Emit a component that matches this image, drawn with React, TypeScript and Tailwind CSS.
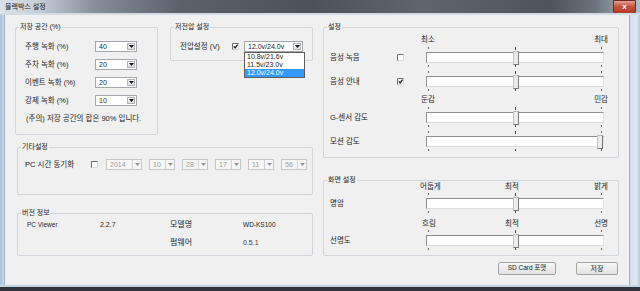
import React from "react";

const Tri = ({ color = "#111" }: { color?: string }) => (
  <svg width="5" height="3" viewBox="0 0 5 3" className="shrink-0">
    <path d="M0 0H5L2.5 3Z" fill={color} />
  </svg>
);

function Check({ checked = false }: { checked?: boolean }) {
  return (
    <svg width="7" height="7" viewBox="0 0 7 7" className="shrink-0">
      <rect x="0" y="0" width="7" height="7" fill="#fff" />
      <path d="M0.5 7V0.5H7" stroke="#6a6a6a" strokeWidth="1" fill="none" />
      <path d="M6.5 0.5V6.5H0.5" stroke="#d8d8d8" strokeWidth="1" fill="none" />
      {checked && <path d="M1.8 3.4L3.1 4.9L5.6 1.6" stroke="#1a1a1a" strokeWidth="1.3" fill="none" />}
    </svg>
  );
}

function Combo({
  value,
  width,
  disabled = false,
  children,
}: {
  value: string;
  width: string;
  disabled?: boolean;
  children?: React.ReactNode;
}) {
  return (
    <div
      className={`relative flex h-[11px] shrink-0 items-stretch border ${width} ${
        disabled ? "border-[#c6c6c6] bg-[#f6f6f6] text-[#9c9c9c]" : "border-[#a3a8af] bg-white text-[#1e1e1e]"
      }`}
    >
      <div className="flex-1 pl-[3px] text-[7px] leading-[9px]">{value}</div>
      {disabled ? (
        <div className="flex w-[9px] items-center justify-center border-l border-[#d2d2d2]">
          <Tri color="#9a9a9a" />
        </div>
      ) : (
        <div className="m-[1px] flex w-[8px] items-center justify-center border border-[#b3b3b3] bg-[linear-gradient(#fbfbfb,#dcdcdc)]">
          <Tri />
        </div>
      )}
      {children}
    </div>
  );
}

function Group({
  title,
  className,
  children,
}: {
  title: string;
  className: string;
  children: React.ReactNode;
}) {
  return (
    <fieldset className={`rounded-[2px] border border-[#cfd5da] ${className}`}>
      <legend className="ml-[3px] px-[1px] text-[7px] leading-[10px] text-[#1e1e1e]">{title}</legend>
      {children}
    </fieldset>
  );
}

function Ticks({ top = false }: { top?: boolean }) {
  return (
    <div className={`flex h-[6px] items-start justify-between px-[2px] ${top ? "pt-[1px]" : "pt-[2px]"}`}>
      <span className="h-[2px] w-[1px] bg-[#6a6a6a]" />
      <span className={`w-[1px] bg-[#4a4a4a] ${top ? "h-[3px]" : "h-[2px]"}`} />
      <span className="h-[2px] w-[1px] bg-[#6a6a6a]" />
    </div>
  );
}

function Slider({ end = false }: { end?: boolean }) {
  return (
    <div className="flex w-[178px] shrink-0 flex-col">
      <Ticks top />
      <div className="relative h-[11px] border border-[#8e8e8e] border-r-[#e4e4e4] border-b-[#dcdcdc] bg-white">
        <div
          className={`absolute top-[-2px] h-[14px] w-[6px] border border-[#7a7a7a] border-t-[#b8b8b8] border-l-[#c4c4c4] bg-[#ececec] ${
            end ? "left-[170px]" : "left-[86px]"
          }`}
        />
      </div>
      <Ticks />
    </div>
  );
}

function SliderRow({ label, check, end }: { label: string; check?: "on" | "off"; end?: boolean }) {
  return (
    <div className="flex items-center">
      <div className="w-[73px] shrink-0 pl-[6px] text-[7.5px] leading-[10px]">{label}</div>
      <div className="flex w-[29px] shrink-0 items-center">{check && <Check checked={check === "on"} />}</div>
      <Slider end={end} />
    </div>
  );
}

function Header2({ a, b }: { a: string; b: string }) {
  return (
    <div className="ml-[97px] flex w-[187px] justify-between text-[7.5px] leading-[10px]">
      <span>{a}</span>
      <span>{b}</span>
    </div>
  );
}

function Header3({ a, b, c, first = "" }: { a: string; b: string; c: string; first?: string }) {
  return (
    <div className="ml-[96px] flex w-[188px] text-[7.5px] leading-[10px]">
      <span className={`w-[85px] ${first}`}>{a}</span>
      <span>{b}</span>
      <span className="ml-auto">{c}</span>
    </div>
  );
}

function StorageRow({ label, value, first }: { label: string; value: string; first?: boolean }) {
  return (
    <div className={`flex h-[11px] items-center ${first ? "" : "mt-[7px]"}`}>
      <div className="w-[79px] shrink-0 pl-[9px] text-[7.5px] leading-[10px]">{label}</div>
      <Combo value={value} width="w-[42px]" />
    </div>
  );
}

export default function App() {
  return (
    <div className="flex h-[291px] w-[640px] flex-col overflow-hidden bg-[#2c3036] font-['Liberation_Sans','Noto_Sans_CJK_KR',sans-serif] text-[#1e1e1e]">
      {/* title bar */}
      <div className="flex h-[13px] items-start bg-[linear-gradient(90deg,#d9e1ea_0%,#c6cfd8_6%,#858d96_15%,#5b626a_28%,#4c525a_48%,#5e656d_66%,#4d545c_86%,#6c737b_93%,#b5bfc9_100%)]">
        <div className="pl-[5px] pt-[2px] text-[7px] leading-[9px] text-[#1a1a1a]">블랙박스 설정</div>
        <div className="ml-auto mr-[4px] flex h-[14px] w-[23px] items-center justify-center rounded-b-[3px] border border-[#6b2a22] bg-[linear-gradient(#e6a092,#c9523f_45%,#b23a26)] text-[8px] font-bold leading-none text-white">
          x
        </div>
      </div>
      <div className="h-[2px] bg-[#d3dce6]" />
      <div className="flex h-[270px]">
        <div className="w-[4px] bg-[linear-gradient(90deg,#a9bfd6,#c9dbec)]" />
        {/* client */}
        <div className="flex w-[626px] border-l border-r border-[#9fb1c4] bg-[#f0f0f0] pl-[10px] pt-[7px]">
          {/* left column */}
          <div className="flex w-[298px] flex-col">
            <div className="flex items-start">
              <Group title="저장 공간 (%)" className="w-[143px] pb-[10px]">
                <div className="pt-[9px]">
                  <StorageRow label="주행 녹화 (%)" value="40" first />
                  <StorageRow label="주차 녹화 (%)" value="20" />
                  <StorageRow label="이벤트 녹화 (%)" value="20" />
                  <StorageRow label="강제 녹화 (%)" value="10" />
                </div>
                <div className="mt-[8px] pl-[10px] text-[7.5px] leading-[10px]">(주의) 저장 공간의 합은 90% 입니다.</div>
              </Group>
              <Group title="저전압 설정" className="ml-[12px] w-[143px] pb-[8px]">
                <div className="mt-[9px] flex h-[11px] items-center">
                  <div className="w-[61px] shrink-0 pl-[9px] text-[7.5px] leading-[10px]">전압설정 (V)</div>
                  <Check checked />
                  <div className="ml-[5px]">
                    <Combo value="12.0v/24.0v" width="w-[59px]">
                      <div className="absolute left-[-1px] top-[10px] z-10 w-[61px] border border-[#5e5e5e] bg-white text-[7px] leading-[8px]">
                        <div className="h-[8px] pl-[2px]">10.8v/21.6v</div>
                        <div className="h-[8px] pl-[2px]">11.5v/23.0v</div>
                        <div className="h-[8px] bg-[#3399ff] pl-[2px] text-white">12.0v/24.0v</div>
                      </div>
                    </Combo>
                  </div>
                </div>
              </Group>
            </div>
            <Group title="기타설정" className="ml-[2px] mt-[7px] w-[296px] pb-[24px]">
              <div className="mt-[7px] flex h-[11px] items-center">
                <div className="w-[73px] shrink-0 pl-[7px] text-[7.5px] leading-[10px]">PC 시간 동기화</div>
                <Check />
                <div className="ml-[8px] flex gap-[7px]">
                  <Combo value="2014" width="w-[36px]" disabled />
                  <Combo value="10" width="w-[26px]" disabled />
                  <Combo value="28" width="w-[26px]" disabled />
                  <Combo value="17" width="w-[26px]" disabled />
                  <Combo value="11" width="w-[26px]" disabled />
                  <Combo value="56" width="w-[26px]" disabled />
                </div>
              </div>
            </Group>
            <Group title="버전 정보" className="ml-[2px] mt-[13px] w-[296px] pb-[7px]">
              <div className="mt-[2px] flex h-[10px] items-center pl-[9px] leading-[10px]">
                <span className="w-[73px] text-[6.5px]">PC Viewer</span>
                <span className="w-[70px] text-[7px]">2.2.7</span>
                <span className="w-[73px] text-[8px]">모델명</span>
                <span className="text-[6.5px]">WD-KS100</span>
              </div>
              <div className="mt-[8px] flex h-[10px] items-center pl-[9px] leading-[10px]">
                <span className="w-[143px]" />
                <span className="w-[73px] text-[8px]">펌웨어</span>
                <span className="text-[7px] text-[#444]">0.5.1</span>
              </div>
            </Group>
          </div>
          {/* right column */}
          <div className="ml-[10px] flex w-[296px] flex-col">
            <Group title="설정" className="w-[296px] pb-[4px]">
              <div className="pt-[3px]">
                <Header2 a="최소" b="최대" />
                <div className="mt-[1px]">
                  <SliderRow label="음성 녹음" check="off" />
                </div>
                <div className="mt-[1px]">
                  <SliderRow label="음성 안내" check="on" />
                </div>
                <div className="mt-[2px]">
                  <Header2 a="둔감" b="민감" />
                </div>
                <div className="mt-[1px]">
                  <SliderRow label="G-센서 감도" />
                </div>
                <div className="mt-[1px]">
                  <SliderRow label="모션 감도" end />
                </div>
              </div>
            </Group>
            <Group title="화면 설정" className="mt-[17px] w-[296px] pb-[3px]">
              <div className="-mt-[3px]">
                <Header3 a="어둡게" b="최적" c="밝게" />
                <SliderRow label="명암" />
                <div className="mt-[4px]">
                  <Header3 a="흐림" b="최적" c="선명" first="pl-[2px]" />
                </div>
                <SliderRow label="선명도" />
              </div>
            </Group>
            <div className="mt-[6px] flex justify-end gap-[20px] pr-[1px]">
              <button className="h-[13px] w-[58px] rounded-[2px] border border-[#a4a4a4] bg-[linear-gradient(#f6f6f6,#e2e2e2)] text-[6.5px] leading-none text-[#222]">
                SD Card 포맷
              </button>
              <button className="h-[13px] w-[42px] rounded-[2px] border border-[#a4a4a4] bg-[linear-gradient(#f6f6f6,#e2e2e2)] text-[7px] leading-none text-[#222]">
                저장
              </button>
            </div>
          </div>
        </div>
        <div className="w-[10px] bg-[linear-gradient(90deg,#cfdceb,#e2ebf4_60%,#b9c9da)]" />
      </div>
      <div className="h-[2px] bg-[#c2d2e2]" />
      <div className="h-[4px] bg-[#30343a]" />
    </div>
  );
}
